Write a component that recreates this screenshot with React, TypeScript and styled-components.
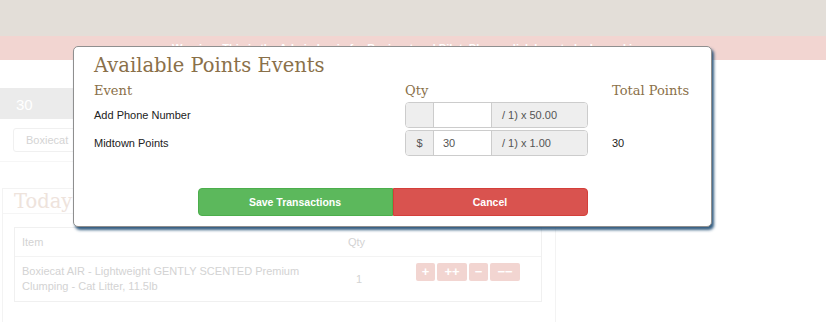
import React from "react";
import styled, { createGlobalStyle } from "styled-components";

const GlobalStyle = createGlobalStyle`
  html, body {
    margin: 0;
    padding: 0;
    background: #ffffff;
  }
  body {
    font-family: "Liberation Sans", Arial, sans-serif;
  }
`;

const serif = `"DejaVu Serif", "Liberation Serif", serif`;

const Page = styled.div`
  position: relative;
  width: 826px;
  height: 322px;
  overflow: hidden;
  background: #ffffff;
`;

const TopBar = styled.div`
  height: 36px;
  background: #e3ded8;
`;

const WarningBar = styled.div`
  height: 24px;
  line-height: 24px;
  background: #f2d5d1;
  color: #ffffff;
  font-size: 11px;
  font-weight: bold;
  padding-left: 172px;
  white-space: nowrap;
`;

const Main = styled.div`
  padding-top: 28px;
`;

const LeftCol = styled.div`
  width: 556px;
`;

const SummaryPanel = styled.div`
  border-bottom: 1px solid #f6f6f6;
  border-right: 1px solid #f6f6f6;
`;

const SummaryHead = styled.div`
  height: 31px;
  line-height: 34px;
  background: #ebebeb;
  color: #ffffff;
  font-size: 15px;
  padding-left: 16px;
`;

const SummaryBody = styled.div`
  padding: 9px 13px;
`;

const SearchInput = styled.div`
  width: 150px;
  height: 22px;
  line-height: 22px;
  border: 1px solid #f0f0f0;
  border-radius: 3px;
  color: #d4d4d4;
  font-size: 11px;
  padding-left: 12px;
`;

const TodayPanel = styled.div`
  margin-top: 26px;
  margin-left: 2px;
  border: 1px solid #f3f3f3;
  border-bottom: none;
  height: 200px;
`;

const TodayHead = styled.h3`
  margin: 0;
  height: 24px;
  padding-left: 11px;
  font-family: ${serif};
  font-weight: normal;
  font-size: 19.5px;
  line-height: 26px;
  color: #eee3dc;
  border-bottom: 1px solid #f5f5f5;
`;

const TodayBody = styled.div`
  padding: 13px 13px 0 11px;
`;

const ItemsTable = styled.div`
  border: 1px solid #f0f0f0;
  color: #d3d3d3;
  font-size: 11px;
`;

const TableRow = styled.div<{ $head?: boolean }>`
  display: grid;
  grid-template-columns: 326px 68px 1fr;
  align-items: center;
  padding: 0 7px;
  height: ${(p) => (p.$head ? "28px" : "44px")};
  line-height: 15px;
  border-top: ${(p) => (p.$head ? "none" : "1px solid #f3f3f3")};
`;

const QtyCell = styled.div<{ $center?: boolean }>`
  padding-left: ${(p) => (p.$center ? "8px" : "0")};
`;

const StepButtons = styled.div`
  display: flex;
  gap: 2px;
  align-self: start;
  margin-top: 6px;
`;

const StepButton = styled.div<{ $w: number }>`
  width: ${(p) => p.$w}px;
  height: 18px;
  line-height: 18px;
  border-radius: 2px;
  background: #f2d5d1;
  color: #ffffff;
  font-weight: bold;
  font-size: 13px;
  text-align: center;
`;

const Modal = styled.div`
  position: absolute;
  top: 46px;
  left: 73px;
  width: 639px;
  background: #ffffff;
  border: 1px solid #8f8f8f;
  border-radius: 5px;
  box-shadow: 2px 3px 3px rgba(30, 75, 115, 0.9);
  padding: 7px 20px 10px 20px;
  box-sizing: border-box;
`;

const ModalTitle = styled.h3`
  margin: 0;
  font-family: ${serif};
  font-weight: normal;
  font-size: 19.5px;
  line-height: 24px;
  color: #8a7049;
`;

const EventGrid = styled.div`
  display: grid;
  grid-template-columns: 311px 207px 1fr;
  row-gap: 2px;
  margin-top: 4px;
`;

const ColHead = styled.div`
  font-family: ${serif};
  font-size: 13px;
  line-height: 18px;
  color: #8a7049;
`;

const Cell = styled.div`
  font-size: 11px;
  line-height: 26px;
  color: #222222;
`;

const InputGroup = styled.div`
  display: grid;
  grid-template-columns: 27px 59px 1fr;
  width: 183px;
  height: 26px;
  box-sizing: border-box;
  border: 1px solid #cccccc;
  border-radius: 4px;
  overflow: hidden;
  font-size: 11px;
  line-height: 24px;
  color: #555555;
`;

const Addon = styled.div<{ $wide?: boolean }>`
  background: #eeeeee;
  text-align: ${(p) => (p.$wide ? "left" : "center")};
  padding-left: ${(p) => (p.$wide ? "10px" : "0")};
`;

const QtyInput = styled.div`
  background: #ffffff;
  border-left: 1px solid #cccccc;
  border-right: 1px solid #cccccc;
  padding-left: 9px;
`;

const Actions = styled.div`
  display: flex;
  justify-content: center;
  margin-top: 32px;
`;

const ActionButton = styled.div<{ $kind: "save" | "cancel" }>`
  width: 195px;
  height: 28px;
  box-sizing: border-box;
  line-height: 26px;
  text-align: center;
  font-size: 10.5px;
  font-weight: bold;
  color: #ffffff;
  background: ${(p) => (p.$kind === "save" ? "#5cb85c" : "#d9534f")};
  border: 1px solid ${(p) => (p.$kind === "save" ? "#4cae4c" : "#d43f3a")};
  border-radius: ${(p) => (p.$kind === "save" ? "4px 0 0 4px" : "0 4px 4px 0")};
`;

const events = [
  { name: "Add Phone Number", prefix: "", qty: "", rate: "/ 1) x 50.00", total: "" },
  { name: "Midtown Points", prefix: "$", qty: "30", rate: "/ 1) x 1.00", total: "30" },
];

export default function App() {
  return (
    <Page>
      <GlobalStyle />
      <TopBar />
      <WarningBar>
        Warning: This is the Admin Login for Boxiecat and Pilot. Please click here to be logged in.
      </WarningBar>
      <Main>
        <LeftCol>
          <SummaryPanel>
            <SummaryHead>30</SummaryHead>
            <SummaryBody>
              <SearchInput>Boxiecat</SearchInput>
            </SummaryBody>
          </SummaryPanel>
          <TodayPanel>
            <TodayHead>Today's Transactions</TodayHead>
            <TodayBody>
              <ItemsTable>
                <TableRow $head>
                  <div>Item</div>
                  <QtyCell>Qty</QtyCell>
                  <div />
                </TableRow>
                <TableRow>
                  <div>
                    Boxiecat AIR - Lightweight GENTLY SCENTED Premium
                    <br />
                    Clumping - Cat Litter, 11.5lb
                  </div>
                  <QtyCell $center>1</QtyCell>
                  <StepButtons>
                    <StepButton $w={19}>+</StepButton>
                    <StepButton $w={30}>++</StepButton>
                    <StepButton $w={19}>−</StepButton>
                    <StepButton $w={30}>−−</StepButton>
                  </StepButtons>
                </TableRow>
              </ItemsTable>
            </TodayBody>
          </TodayPanel>
        </LeftCol>
      </Main>

      <Modal>
        <ModalTitle>Available Points Events</ModalTitle>
        <EventGrid>
          <ColHead>Event</ColHead>
          <ColHead>Qty</ColHead>
          <ColHead>Total Points</ColHead>
          {events.map((ev) => (
            <React.Fragment key={ev.name}>
              <Cell>{ev.name}</Cell>
              <InputGroup>
                <Addon>{ev.prefix}</Addon>
                <QtyInput>{ev.qty}</QtyInput>
                <Addon $wide>{ev.rate}</Addon>
              </InputGroup>
              <Cell>{ev.total}</Cell>
            </React.Fragment>
          ))}
        </EventGrid>
        <Actions>
          <ActionButton $kind="save">Save Transactions</ActionButton>
          <ActionButton $kind="cancel">Cancel</ActionButton>
        </Actions>
      </Modal>
    </Page>
  );
}
